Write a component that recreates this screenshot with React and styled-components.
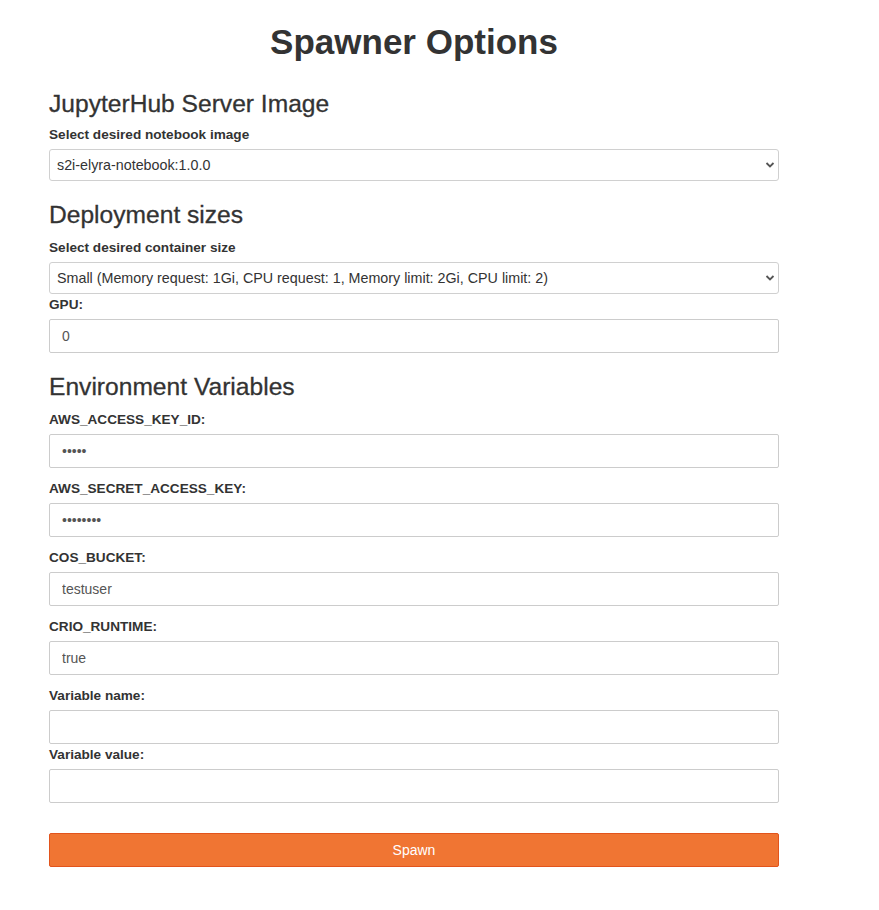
import styled, { createGlobalStyle } from 'styled-components';

const GlobalStyle = createGlobalStyle`
	body {
		margin: 0;
		background: #fff;
		color: #333;
		font-family: "Liberation Sans", Arial, sans-serif;
	}
`;

const Page = styled.div`
	width: 730px;
	padding: 22px 0 40px 49px;
`;

const Title = styled.h1`
	margin: 0;
	font-size: 35px;
	font-weight: 700;
	line-height: 40px;
	text-align: center;
	color: #333;
`;

const SectionTitle = styled.h3`
	margin: ${({ $top }) => $top}px 0 0;
	font-size: 24.6px;
	font-weight: 400;
	line-height: 26px;
	color: #333;
	-webkit-text-stroke: 0.3px #333;
`;

const Label = styled.label`
	display: block;
	margin: ${({ $top }) => $top}px 0 6px;
	font-size: 13.6px;
	font-weight: 700;
	line-height: 17px;
	color: #333;
`;

const SelectWrap = styled.div`
	position: relative;
	height: 32px;
`;

const Select = styled.select`
	appearance: none;
	width: 100%;
	height: 32px;
	box-sizing: border-box;
	padding: 0 30px 0 7px;
	border: 1px solid #d0d0d0;
	border-radius: 3px;
	background: #fff;
	font-family: "Liberation Sans", Arial, sans-serif;
	font-size: 14.3px;
	color: #333;
	outline: none;
`;

const Chevron = styled.svg`
	position: absolute;
	right: 4px;
	top: 12px;
	pointer-events: none;
`;

const Input = styled.input`
	display: block;
	width: 100%;
	height: 34px;
	box-sizing: border-box;
	padding: 0 12px;
	border: 1px solid #ccc;
	border-radius: 2px;
	background: #fff;
	font-family: "Liberation Sans", Arial, sans-serif;
	font-size: 14px;
	color: #555;
	outline: none;
`;

const SpawnButton = styled.button`
	display: block;
	width: 100%;
	height: 34px;
	margin-top: 30px;
	border: 1px solid #e2541c;
	border-radius: 2px;
	background: #f07533;
	color: #fff;
	font-family: "Liberation Sans", Arial, sans-serif;
	font-size: 14px;
	cursor: pointer;
`;

const Dropdown = ({ value }) => (
	<SelectWrap>
		<Select defaultValue={value}>
			<option value={value}>{value}</option>
		</Select>
		<Chevron width="10" height="8" viewBox="0 0 10 8">
			<path d="M1.5 2 L5 5.5 L8.5 2" fill="none" stroke="#555" strokeWidth="1.8" />
		</Chevron>
	</SelectWrap>
);

const envFields = [
	{ name: 'AWS_ACCESS_KEY_ID:', value: '•••••', top: 11 },
	{ name: 'AWS_SECRET_ACCESS_KEY:', value: '••••••••', top: 12 },
	{ name: 'COS_BUCKET:', value: 'testuser', top: 12 },
	{ name: 'CRIO_RUNTIME:', value: 'true', top: 12 },
	{ name: 'Variable name:', value: '', top: 12 },
	{ name: 'Variable value:', value: '', top: 2 },
];

export default function App() {
	return (
		<>
			<GlobalStyle />
			<Page>
				<Title>Spawner Options</Title>

				<SectionTitle $top={29}>JupyterHub Server Image</SectionTitle>
				<Label $top={9}>Select desired notebook image</Label>
				<Dropdown value="s2i-elyra-notebook:1.0.0" />

				<SectionTitle $top={21}>Deployment sizes</SectionTitle>
				<Label $top={11}>Select desired container size</Label>
				<Dropdown value="Small (Memory request: 1Gi, CPU request: 1, Memory limit: 2Gi, CPU limit: 2)" />
				<Label $top={2}>GPU:</Label>
				<Input defaultValue="0" />

				<SectionTitle $top={21}>Environment Variables</SectionTitle>
				{envFields.map(({ name, value, top }) => (
					<div key={name}>
						<Label $top={top}>{name}</Label>
						<Input defaultValue={value} />
					</div>
				))}

				<SpawnButton>Spawn</SpawnButton>
			</Page>
		</>
	);
}
